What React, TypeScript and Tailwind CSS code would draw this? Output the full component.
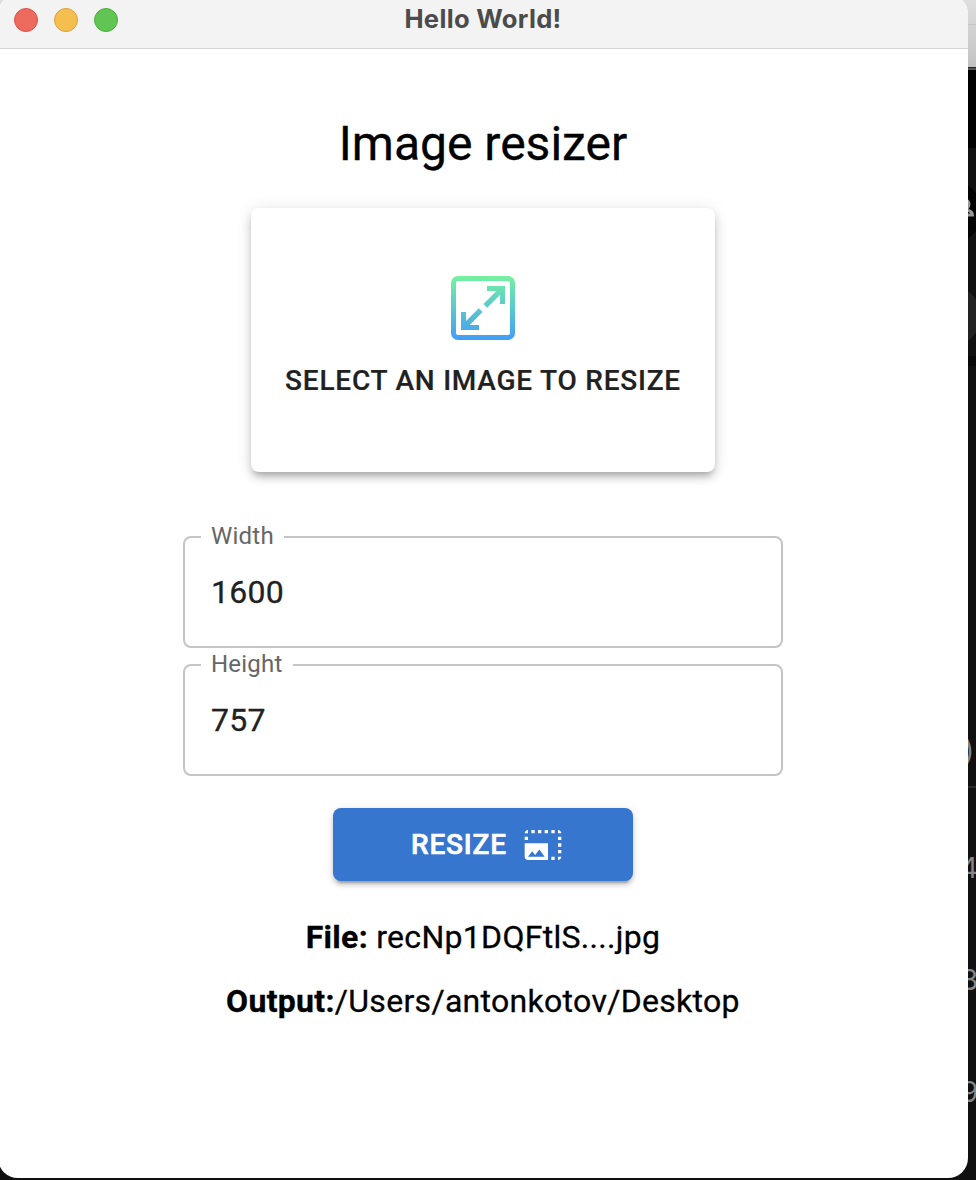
import React from "react";

function ScaleIcon() {
  return (
    <svg className="block size-16" viewBox="0 0 64 64" fill="none">
      <defs>
        <linearGradient id="scale" x1="0" y1="0" x2="0" y2="64" gradientUnits="userSpaceOnUse">
          <stop offset="0" stopColor="#75f2a0" />
          <stop offset="1" stopColor="#429df8" />
        </linearGradient>
      </defs>
      <g stroke="url(#scale)" strokeWidth="5">
        <rect x="2.5" y="2.5" width="59" height="59" rx="4.5" />
      </g>
      <g fill="url(#scale)">
        <path d="M36 10H54V28H49V18.9L36.2 31.7L32.4 28L45.3 15H36Z" />
        <path d="M28 54H10V36H15V45.1L27.8 32.3L31.6 36L18.7 49H28Z" />
      </g>
    </svg>
  );
}

function PhotoSizeIcon() {
  return (
    <svg className="block size-10" viewBox="0 0 24 24" fill="currentColor">
      <path d="M21 15h2v2h-2v-2zm0-4h2v2h-2v-2zm2 8h-2v2c1 0 2-1 2-2zM13 3h2v2h-2V3zm8 4h2v2h-2V7zm0-4v2h2c0-1-1-2-2-2zM1 7h2v2H1V7zm16-4h2v2h-2V3zm0 16h2v2h-2v-2zM3 3C2 3 1 4 1 5h2V3zm6 0h2v2H9V3zM5 3h2v2H5V3zm-4 8v8c0 1.1.9 2 2 2h12V11H1zm2 8l2.5-3.21 1.79 2.15 2.5-3.22L13 19H3z" />
    </svg>
  );
}

function Field({ label, value }: { label: string; value: string }) {
  return (
    <fieldset className="h-[123px] w-[600px] rounded-lg border-2 border-[#c4c4c4] px-4">
      <legend className="h-6 pr-[10px] pl-[10px] text-[24px] leading-[22px] tracking-[0.225px] text-[#666]">
        {label}
      </legend>
      <div className="mt-[23px] pl-[10px] text-[32px] leading-[40px] tracking-[0.3px] text-[#212121] [-webkit-text-stroke:0.3px]">
        {value}
      </div>
    </fieldset>
  );
}

function Backdrop() {
  return (
    <div className="absolute inset-0 bg-[#101010]">
      <div className="h-[67px] bg-linear-to-b from-[#dedede] to-[#c2c2c2]">
        <div className="h-[25px] border-b border-[#c3c3c3]" />
      </div>
      <div className="h-[3px] border-t border-[#222] bg-[#555]" />
      <div className="h-[78px] bg-black" />
      <svg className="absolute top-0 right-0" width="16" height="1180" viewBox="960 0 16 1180">
        <circle cx="950" cy="212" r="32" fill="#030303" />
        <circle cx="951" cy="316" r="30" fill="#222" />
        <rect x="960" y="356" width="16" height="10" fill="#080808" />
        <path d="M966 200Q969.5 201 969 205Q968.5 208 966 210Q972.5 211 972.5 215H964" fill="none" stroke="#999" strokeWidth="2.8" />
        <rect x="960" y="786" width="16" height="2" fill="#2b2b2b" />
        <g fill="#858585" fontFamily="Inter, sans-serif" fontSize="28">
          <text x="964" y="760">)</text>
          <text x="960" y="878">4</text>
          <text x="961" y="990">3</text>
          <text x="961" y="1102">9</text>
        </g>
      </svg>
    </div>
  );
}

export default function App() {
  return (
    <div className="relative h-[1180px] w-[976px] overflow-hidden font-['Roboto',sans-serif]">
      <Backdrop />
      <main className="absolute top-[-6px] left-[-2px] flex h-[1184px] w-[970px] flex-col overflow-hidden rounded-[20px] bg-white">
        <header className="grid h-[55px] shrink-0 grid-cols-[1fr_auto_1fr] items-center border-b border-[#d5d5d5] bg-[#f3f3f3] pt-[6px]">
          <div className="flex gap-4 pb-[8px] pl-[16px]">
            <span className="size-6 rounded-full border border-[#d95448] bg-[#ed6a5e]" />
            <span className="size-6 rounded-full border border-[#d8a040] bg-[#f5bf4f]" />
            <span className="size-6 rounded-full border border-[#4dad3d] bg-[#61c554]" />
          </div>
          <h1 className="pb-[10px] font-['Inter',sans-serif] text-[25.6px] leading-[30px] font-bold tracking-[0.3px] text-[#4b4b4b]">
            Hello World!
          </h1>
        </header>
        <section className="flex flex-col items-center text-black">
          <h2 className="mt-[67px] text-[48px] leading-[56px] [-webkit-text-stroke:0.3px]">Image resizer</h2>
          <button className="mt-[36px] flex h-[264px] w-[464px] flex-col items-center rounded-lg bg-white pt-[68px] text-[#212121] shadow-[0_6px_6px_-4px_rgba(0,0,0,0.2),0_6px_8px_0_rgba(0,0,0,0.14),0_2px_16px_0_rgba(0,0,0,0.12)]">
            <ScaleIcon />
            <span className="mt-[21px] text-[28px] leading-[40px] font-medium tracking-[0.77px] whitespace-nowrap [-webkit-text-stroke:0.2px]">
              SELECT AN IMAGE TO RESIZE
            </span>
          </button>
          <div className="mt-[53px] flex flex-col gap-[5px]">
            <Field label="Width" value="1600" />
            <Field label="Height" value="757" />
          </div>
          <button className="mt-8 flex h-[73px] w-[300px] items-center justify-center gap-4 rounded-lg bg-[#3676ce] pl-2 text-[28px] font-medium tracking-[0.8px] text-white shadow-[0_6px_2px_-4px_rgba(0,0,0,0.2),0_4px_4px_0_rgba(0,0,0,0.14),0_2px_10px_0_rgba(0,0,0,0.12)]">
            <span className="[-webkit-text-stroke:0.6px]">RESIZE</span>
            <PhotoSizeIcon />
          </button>
          <p className="mt-[36px] text-[32px] leading-[40px] tracking-[0.3px] [-webkit-text-stroke:0.3px]">
            <b>File:</b> recNp1DQFtlS....jpg
          </p>
          <p className="mt-6 text-[32px] leading-[40px] tracking-[0.3px] [-webkit-text-stroke:0.3px]">
            <b>Output:</b>/Users/antonkotov/Desktop
          </p>
        </section>
      </main>
    </div>
  );
}
